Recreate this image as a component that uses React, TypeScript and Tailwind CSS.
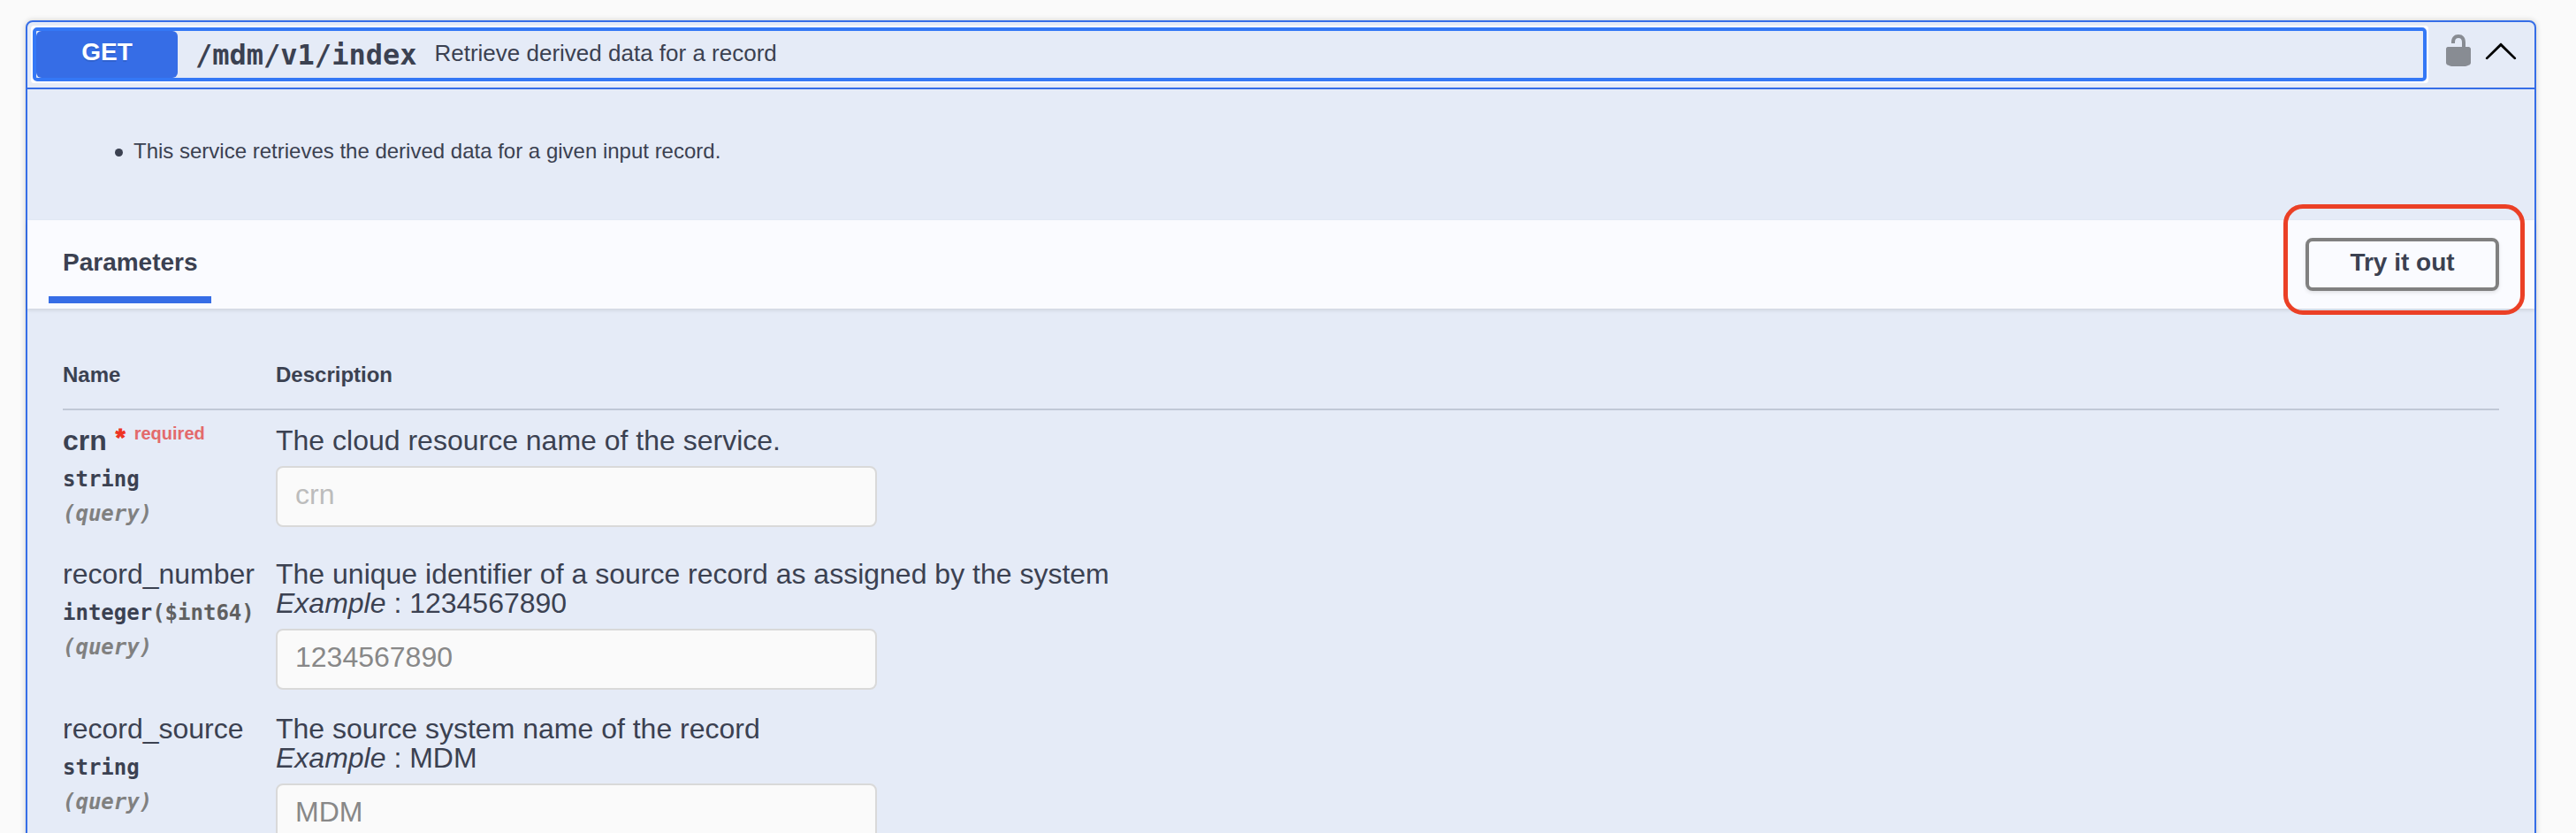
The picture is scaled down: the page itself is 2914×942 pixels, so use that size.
import React from 'react';

interface Parameter {
  name: string;
  required?: boolean;
  type: string;
  format?: string;
  description: string;
  example?: string;
}

const PARAMETERS: Parameter[] = [
  { name: 'crn', required: true, type: 'string', description: 'The cloud resource name of the service.' },
  {
    name: 'record_number',
    type: 'integer',
    format: '($int64)',
    description: 'The unique identifier of a source record as assigned by the system',
    example: '1234567890',
  },
  { name: 'record_source', type: 'string', description: 'The source system name of the record', example: 'MDM' },
];

const UnlockIcon: React.FC = () => (
  <svg viewBox="0 0 20 20" className="w-10 h-10 opacity-40">
    <path d="M15.8 8H14V5.6C14 2.703 12.665 1 10 1 7.334 1 6 2.703 6 5.6V6h2v-.801C8 3.754 8.797 3 10 3c1.203 0 2 .754 2 2.199V8H4c-.553 0-1 .646-1 1.199V17c0 .549.428 1.139.951 1.307l1.197.387C5.672 18.861 6.55 19 7.1 19h5.8c.549 0 1.428-.139 1.951-.307l1.196-.387c.524-.167.953-.757.953-1.306V9.199C17 8.646 16.352 8 15.8 8z" />
  </svg>
);

const ArrowUpIcon: React.FC = () => (
  <svg viewBox="0 0 20 20" className="w-10 h-10">
    <path d="M17.418 14.908c.272.268.709.268.979 0s.271-.701 0-.969l-7.908-7.83c-.27-.268-.707-.268-.979 0l-7.908 7.83c-.27.268-.27.701 0 .969.271.268.709.268.979 0L10 7.767l7.418 7.141z" />
  </svg>
);

const OperationSummary: React.FC = () => (
  <div className="flex items-start h-[76px] pt-2.5 pl-2.5 pr-[18px] border-b-2 border-[#366ee7]">
    <button className="flex grow h-[53px] text-left rounded-[1px] outline-4 outline-[#3478f6] shadow-[0_0_0_6px_#ffffff] bg-[#e5ebf7]">
      <span className="w-40 h-[53px] rounded-md bg-[#366de6] text-white text-[28px] leading-[48px] font-bold text-center [text-shadow:0_2px_0_rgba(0,0,0,0.1)]">
        GET
      </span>
      <span className="ml-5 font-['DejaVu_Sans_Mono',monospace] text-[32px] leading-[54px] font-bold">/mdm/v1/index</span>
      <span className="ml-5 text-[26px] leading-[50px]">Retrieve derived data for a record</span>
    </button>
    <div className="flex gap-2 ml-5 mt-0.5">
      <UnlockIcon />
      <ArrowUpIcon />
    </div>
  </div>
);

const ParameterRow: React.FC<{ param: Parameter }> = ({ param }) => (
  <div className="flex">
    <div className="w-[241px] shrink-0 pt-[15px] pb-[14px]">
      <div className="flex h-[38px] mb-[5px] text-[32px] leading-[38px]">
        <span className={param.required ? 'font-bold' : ''}>{param.name}</span>
        {param.required && (
          <>
            <span className="ml-2.5 -mt-[3px] text-[28px] leading-[38px] font-bold text-[#ee3322] [-webkit-text-stroke:1px_#ee3322]">*</span>
            <span className="ml-2.5 -mt-2 text-[20px] leading-[38px] font-bold text-[#e36a6b]">required</span>
          </>
        )}
      </div>
      <div className="font-['DejaVu_Sans_Mono',monospace] text-2xl leading-10 font-bold whitespace-nowrap">
        {param.type}
        <span className="text-[#606060]">{param.format}</span>
      </div>
      <div className="font-['DejaVu_Sans_Mono',monospace] text-2xl leading-[39px] font-bold italic text-[#808080]">(query)</div>
    </div>
    <div className="pt-[18px] pb-[10px] text-[32px] leading-[33px]">
      <p>{param.description}</p>
      {param.example && (
        <p>
          <i>Example</i> : {param.example}
        </p>
      )}
      <input
        disabled
        placeholder={param.example ? undefined : param.name}
        defaultValue={param.example}
        className="block mt-3 w-[680px] h-[69px] pl-5 pb-1 border-2 border-[#d9d9d9] rounded-lg bg-[#fafafa] text-[#888888] placeholder:text-[#bcbcbc]"
      />
    </div>
  </div>
);

const App: React.FC = () => {
  return (
    <div className="h-[942px] overflow-hidden bg-[#fafafa] pt-[23px] pl-[29px] pr-[45px] font-['Liberation_Sans',Arial,sans-serif] text-[#3b4151]">
      <div className="h-[1000px] border-2 border-[#366ee7] rounded-lg bg-[#e5ebf7] shadow-[0_0_6px_rgba(0,0,0,0.19)]">
        <OperationSummary />

        <ul className="h-[148px] pt-[50px] pl-[99px] text-2xl leading-10">
          <li className="flex items-center gap-3">
            <span className="w-[9px] h-[9px] mt-0.5 rounded-full bg-[#3b4151]" />
            This service retrieves the derived data for a given input record.
          </li>
        </ul>

        <div className="flex justify-between items-start h-[100px] pl-6 pr-10 bg-[#fafbff] shadow-[0_2px_4px_rgba(0,0,0,0.1)]">
          <h4 className="w-[184px] h-[94px] pl-4 border-b-8 border-[#366de6] text-[28px] leading-[95px] font-bold">Parameters</h4>
          <div className="relative mt-5">
            <button className="block w-[219px] h-[60px] border-4 border-[#808080] rounded-lg text-[28px] leading-[46px] pb-[5px] font-bold shadow-[0_2px_4px_rgba(0,0,0,0.1)]">
              Try it out
            </button>
            {/* callout around the button */}
            <div className="absolute -left-[25px] -top-[38px] w-[273px] h-[125px] border-[5px] border-[#eb4026] rounded-[22px]" />
          </div>
        </div>

        <div className="pl-10 pr-10">
          <div className="flex h-[115px] pt-[55px] border-b-2 border-[#c1c8d6] text-2xl leading-10 font-bold">
            <span className="w-[241px]">Name</span>
            <span>Description</span>
          </div>
          {PARAMETERS.map((param) => (
            <ParameterRow key={param.name} param={param} />
          ))}
        </div>
      </div>
    </div>
  );
};

export default App;
